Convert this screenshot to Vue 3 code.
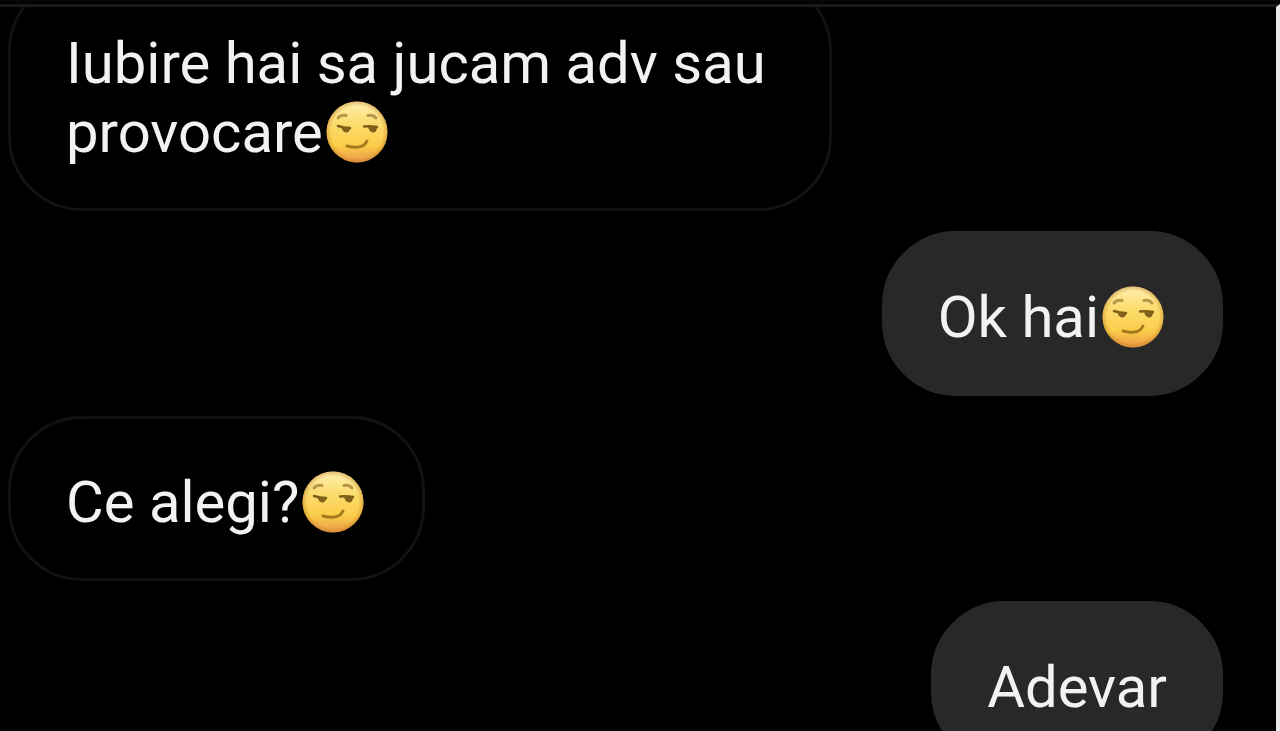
<script setup>
const messages = [
  { id: 1, text: 'Iubire hai sa jucam adv sau provocare', smirk: true, own: false },
  { id: 2, text: 'Ok hai', smirk: true, own: true },
  { id: 3, text: 'Ce alegi?', smirk: true, own: false },
  { id: 4, text: 'Adevar', smirk: false, own: true },
]
</script>

<template>
  <main class="chat">
    <ol class="messages">
      <li v-for="m in messages" :key="m.id" class="bubble" :class="{ own: m.own }">
        <p class="text">{{ m.text }}<svg v-if="m.smirk" class="emoji" viewBox="0 0 62 62" role="img" aria-label="smirk">
            <defs>
              <linearGradient :id="'face' + m.id" x1="0" y1="0" x2="0" y2="1">
                <stop offset="0" stop-color="#fff0b0" />
                <stop offset="0.35" stop-color="#fbdd70" />
                <stop offset="0.72" stop-color="#fbcd4a" />
                <stop offset="1" stop-color="#e99a48" />
              </linearGradient>
              <radialGradient :id="'rim' + m.id">
                <stop offset="0.84" stop-color="#b87018" stop-opacity="0" />
                <stop offset="1" stop-color="#b87018" stop-opacity="0.4" />
              </radialGradient>
            </defs>
            <circle cx="31" cy="31" r="30.500" :fill="`url(#face${m.id})`" />
            <circle cx="31" cy="31" r="30.500" :fill="`url(#rim${m.id})`" />
            <g fill="none" stroke-linecap="round" stroke-linejoin="round">
              <path d="M12 17Q15 13.500 20 14.500M42 14.500Q47 13.500 50 17" stroke="#b8964a" stroke-width="3" />
              <path d="M12 25Q18 27 24 27M38 25.500Q45 25 51 26" stroke="#806018" stroke-width="2.500" />
              <path d="M21 45Q37 49 41 40" stroke="#a57a1c" stroke-width="3" />
            </g>
            <path d="M15 25.500Q20 27.500 24.500 27Q23.500 31.500 20 31.500Q16.500 31 15 25.500ZM42 25.500Q46 25 51 26Q51 31.500 47 31.500Q43 31 42 25.500Z" fill="#80601a" />
          </svg></p>
      </li>
    </ol>
  </main>
</template>

<style>
body {
  margin: 0;
  background: #000;
}
</style>

<style scoped>
.chat {
  box-sizing: border-box;
  height: 100vh;
  overflow: hidden;
  padding-top: 4px;
  background: linear-gradient(#080808, #000 4px);
}

.messages {
  box-sizing: border-box;
  display: flex;
  flex-direction: column;
  align-items: flex-start;
  gap: 20px;
  height: 100%;
  margin: 0;
  padding: 0 53px 0 8px;
  overflow: hidden;
  list-style: none;
  border-top: 3px solid #191919;
  border-right: 4px solid #e8e8e8;
}

.bubble {
  box-sizing: border-box;
  flex: none;
  max-width: 824px;
  padding: 49px 55px 41px;
  border: 3px solid #121212;
  border-radius: 74px;
}

.bubble:first-child {
  margin-top: -30px;
}

.bubble.own {
  align-self: flex-end;
  padding-right: 53px;
  padding-left: 53px;
  background: #282828;
  border-color: #282828;
}

.text {
  margin: 0;
  color: #f2f2f2;
  font-family: Roboto, "Liberation Sans", sans-serif;
  font-size: 58px;
  line-height: 69px;
}

.emoji {
  width: 62px;
  height: 62px;
  margin: 0 3px;
  vertical-align: -11px;
}
</style>
